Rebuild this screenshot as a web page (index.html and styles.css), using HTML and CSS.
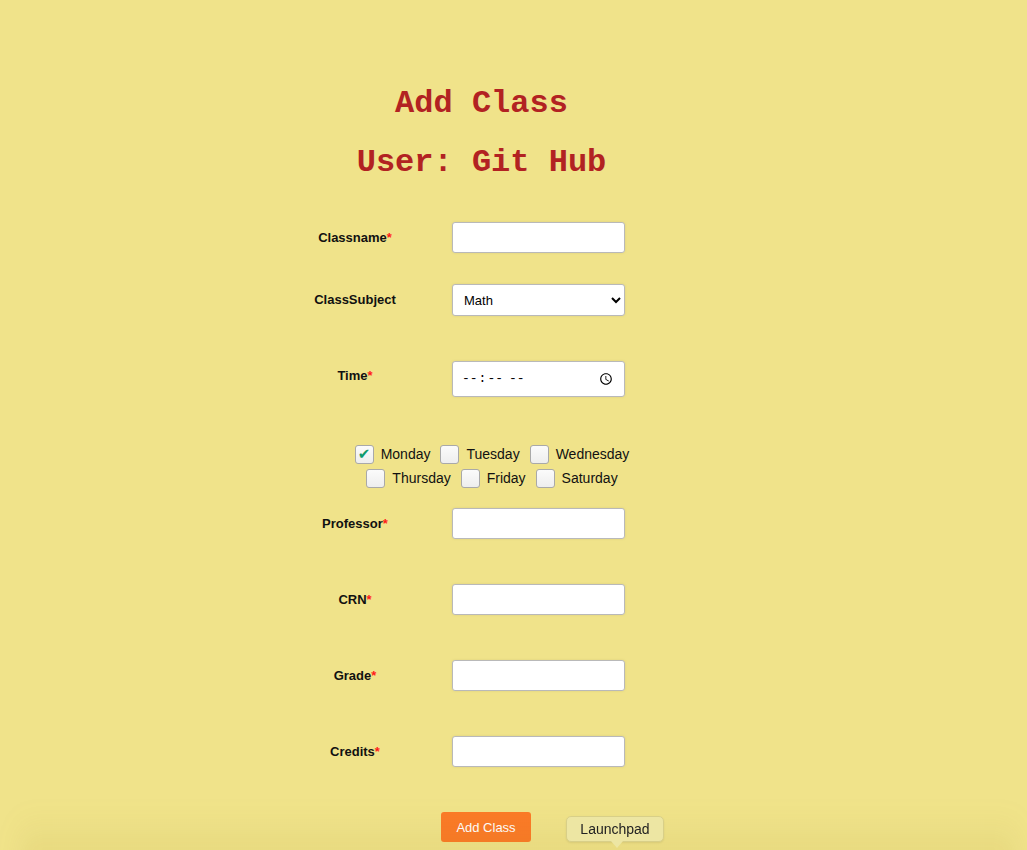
FILE: index.html
```html
<!DOCTYPE html>
<html lang="en">
<head>
<meta charset="utf-8">
<title>Add Class</title>
<link rel="stylesheet" href="styles.css">
</head>
<body>
<div class="page">
  <h1 class="title">Add Class</h1>
  <h1 class="title">User: Git Hub</h1>
  <form class="form">
    <div class="row">
      <label class="label">Classname<span class="req">*</span></label>
      <input class="field" type="text">
    </div>
    <div class="row row-select">
      <label class="label">ClassSubject</label>
      <select class="field select">
        <option>Math</option>
      </select>
    </div>
    <div class="row row-time">
      <label class="label label-top">Time<span class="req">*</span></label>
      <input class="field time" type="time">
    </div>
    <div class="days">
      <span class="day"><span class="box checked">✔</span>Monday</span>
      <span class="day"><span class="box"></span>Tuesday</span>
      <span class="day"><span class="box"></span>Wednesday</span>
      <span class="day"><span class="box"></span>Thursday</span>
      <span class="day"><span class="box"></span>Friday</span>
      <span class="day"><span class="box"></span>Saturday</span>
    </div>
    <div class="row row-after-days">
      <label class="label">Professor<span class="req">*</span></label>
      <input class="field" type="text">
    </div>
    <div class="row row-gap">
      <label class="label">CRN<span class="req">*</span></label>
      <input class="field" type="text">
    </div>
    <div class="row row-gap">
      <label class="label">Grade<span class="req">*</span></label>
      <input class="field" type="text">
    </div>
    <div class="row row-gap">
      <label class="label">Credits<span class="req">*</span></label>
      <input class="field" type="text">
    </div>
  </form>
  <div class="actions">
    <button class="submit" type="button">Add Class</button>
  </div>
</div>
<div class="dock-shade"></div>
<div class="tooltip">Launchpad</div>
</body>
</html>
```
FILE: styles.css
```css
html, body {
  margin: 0;
  padding: 0;
  height: 100%;
  overflow: hidden;
}
body {
  background: #f0e38a;
  font-family: "Liberation Sans", Arial, sans-serif;
  color: #111;
}
.page {
  width: 963px;
  padding-top: 63px;
}
.title {
  font-family: "Liberation Mono", "Courier New", monospace;
  font-weight: bold;
  font-size: 32px;
  line-height: 37px;
  color: #b22222;
  text-align: center;
  margin: 22px 0;
}
.form {
  width: 325px;
  margin: 41px 0 0 300px;
}
.row {
  display: flex;
  align-items: center;
  gap: 42px;
}
.row-select { margin-top: 31px; }
.row-time { margin-top: 45px; }
.row-after-days { margin-top: 18px; }
.row-gap { margin-top: 45px; }
.label {
  width: 110px;
  text-align: center;
  font-size: 13px;
  font-weight: bold;
  line-height: 16px;
}
.label-top { margin-top: -6px; }
.req { color: #ff1a1a; }
.field {
  box-sizing: border-box;
  width: 173px;
  height: 31px;
  border: 1px solid #b9b9b9;
  border-radius: 3px;
  background: #fff;
  box-shadow: 0 0 3px rgba(0, 0, 0, 0.08);
  font-family: "Liberation Sans", Arial, sans-serif;
  font-size: 13px;
  padding: 0 8px;
  margin: 0;
}
.select {
  height: 32px;
  padding: 0 4px 0 7px;
}
.time {
  height: 36px;
  font-family: "Liberation Mono", monospace;
  font-size: 13px;
}
.days {
  width: 300px;
  margin: 45px 0 0 42px;
  display: flex;
  flex-wrap: wrap;
  justify-content: center;
}
.day {
  display: flex;
  align-items: center;
  height: 24px;
  margin: 0 5px;
  font-size: 14px;
  color: #111;
}
.box {
  box-sizing: border-box;
  width: 19px;
  height: 19px;
  margin-right: 7px;
  border: 1px solid #a9a9a9;
  border-radius: 3px;
  background: linear-gradient(#fbfbfb, #eeeeee);
  display: flex;
  align-items: center;
  justify-content: center;
  font-size: 15px;
  line-height: 1;
  color: #0e9b6c;
  font-family: "DejaVu Sans", sans-serif;
}
.actions {
  margin: 45px 0 0 441px;
}
.submit {
  width: 90px;
  height: 30px;
  border: none;
  border-radius: 3px;
  background: #fb7a27;
  color: #fff;
  font-family: "Liberation Sans", Arial, sans-serif;
  font-size: 13px;
  padding: 0;
}
.dock-shade {
  position: fixed;
  left: 20px;
  right: 10px;
  bottom: -20px;
  height: 60px;
  background: linear-gradient(to bottom, rgba(150, 125, 20, 0), rgba(150, 125, 20, 0.12));
  filter: blur(12px);
  pointer-events: none;
}
.tooltip {
  position: fixed;
  left: 566px;
  top: 816px;
  box-sizing: border-box;
  width: 98px;
  height: 26px;
  border: 1px solid #d8cf88;
  border-radius: 5px;
  background: #ede6a3;
  box-shadow: 0 1px 2px rgba(0, 0, 0, 0.08);
  font-family: "Liberation Sans", Arial, sans-serif;
  font-size: 14px;
  line-height: 24px;
  text-align: center;
  color: #222;
}
.tooltip::after {
  content: "";
  position: absolute;
  left: 44px;
  bottom: -7px;
  width: 0;
  height: 0;
  border-left: 6px solid transparent;
  border-right: 6px solid transparent;
  border-top: 7px solid #ede6a3;
}
```
